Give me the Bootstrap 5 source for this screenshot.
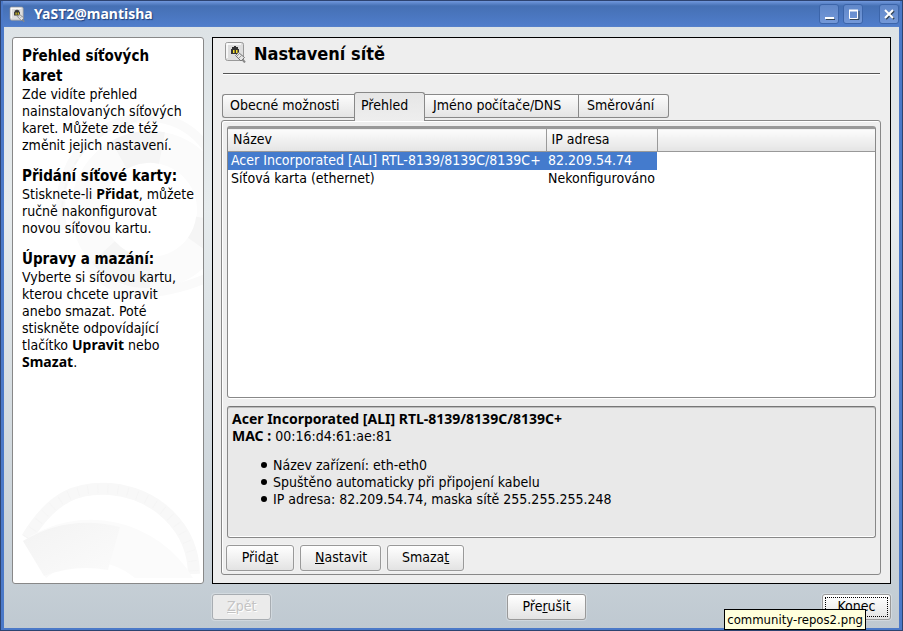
<!DOCTYPE html>
<html lang="cs">
<head>
<meta charset="utf-8">
<meta name="viewport" content="width=device-width, initial-scale=1">
<title>YaST2@mantisha</title>
<link href="https://cdn.jsdelivr.net/npm/bootstrap@5.3.0/dist/css/bootstrap.min.css" rel="stylesheet">
<style>
  body { font: 14px/17px "DejaVu Sans Condensed", "DejaVu Sans", sans-serif; color: #000; }
  b { font-family: "Noto Sans", "DejaVu Sans", sans-serif; line-height: 16px; }
  .app-window { min-height: 100vh; background: #4b79c8; border: 1px solid #2d4370; padding: 0 3px 2px; }
  .titlebar { height: 25px; background: linear-gradient(#7198dd, #4570b4 20%, #4f7dcb); color: #fff; padding: 0 1px 0 6px; margin: 0 -1px; }
  .titlebar h1 { font: bold 14px/24px "Noto Sans", "DejaVu Sans", sans-serif; text-shadow: 1px 1px 1px #1e3f7c; margin-left: 9px; }
  .win-btn { width: 20px; height: 20px; border: 1px solid #3c65aa; border-radius: 3px; background: linear-gradient(#6087c9, #7398d8); }
  .client { background: linear-gradient(#dde3e6, #e6ebed 30%, #c6cfd6 92%, #bfc9d1); padding: 10px 8px 8px; border-top: 1px solid #5580ca; }
  .help-box { flex: 0 0 192px; background: #fff; border: 1px solid #888; border-radius: 3px; overflow: hidden; }
  .help-text { padding: 8px 4px 8px 9px; }
  .help-text h2 { font: bold 15px/20px "DejaVu Sans Condensed", "DejaVu Sans", sans-serif; margin: 0; padding-right: 16px; }
  .help-text p { margin: 0 0 12px; }
  .panel { background: #eee; border: 1px solid #000; padding: 0 9px 8px 8px; }
  .panel-head { height: 36px; border-bottom: 1px solid #555; box-shadow: 0 1px #fff; margin: 0 1px 0 2px; padding: 3px 0 0 1px; }
  .panel-head h2 { font: bold 18px/26px "DejaVu Sans Condensed", "DejaVu Sans", sans-serif; margin: 0 0 0 8px; }
  .tab-strip { margin: 18px 0 0 1px; border: 0; }
  .tab-strip .nav-link { color: #000; line-height: 17px; padding: 1px 7px 2px; height: 24px; margin: 0 0 2px; border: 1px solid #888; border-left-width: 0; border-radius: 0; background: linear-gradient(#fcfcfc, #e4e4e4); }
  .tab-strip .nav-item:first-child .nav-link { width: 132px; border-left-width: 1px; border-radius: 3px 0 0 3px; border-right-width: 0; }
  .tab-strip .nav-item:nth-child(3) .nav-link { width: 154px; padding-left: 8px; }
  .tab-strip .nav-item:last-child .nav-link { width: 90px; padding-left: 8px; border-radius: 0 3px 3px 0; }
  .tab-strip .nav-link.active { width: 71px; height: 29px; padding: 0 6px 4px; margin-bottom: -1px; border: 1px solid #888; border-bottom: 0; border-radius: 3px 3px 0 0; background: linear-gradient(#e6e6e6, #eee); color: #000; position: relative; z-index: 1; }
  .pane { background: #eee; border: 1px solid #888; border-radius: 3px; box-shadow: inset 1px 1px #fff; padding: 5px 4px 3px 5px; }
  .list-frame { background: #fff; border: 1px solid #888; border-top: 2px solid #999; border-radius: 3px; box-shadow: 0 1px #fff; min-height: 272px; }
  .cards { table-layout: fixed; color: #000; --bs-table-color: #000; }
  .cards col.c-name { width: 318px; }
  .cards col.c-ip { width: 111px; }
  .cards th, .cards td { white-space: nowrap; border: 0; }
  .cards thead th { font-weight: normal; height: 23px; padding: 2px 5px 3px; background: linear-gradient(#fcfcfc, #e4e4e4); border-top: 1px solid #999; border-bottom: 1px solid #999; }
  .cards thead th:not(:last-child) { border-right: 1px solid #999; }
  .cards tbody td { height: 18px; padding: 0 0 1px 3px; line-height: 17px; }
  .cards tbody td + td { padding-left: 2px; }
  .cards tbody .picked td { background: #447bcd; color: #fff; }
  .cards tbody td:last-child { background: #fff !important; }
  .detail { background: #e9e9e9; border: 1px solid #888; border-top-color: #777; border-radius: 3px; box-shadow: inset 0 1px #bbb, inset 0 -1px #fff; margin-top: 8px; padding: 4px; }
  .detail ul { margin: 12px 0 0; padding-left: 29px; list-style: none; }
  .detail li::before { content: ""; display: inline-block; width: 6px; height: 6px; border-radius: 50%; background: #000; margin: 0 6px 2px 0; }
  .btn-kde { font-size: 14px; line-height: 17px; height: 26px; padding: 2px 14px 3px; color: #000; border: 1px solid #999; border-radius: 3px; background: linear-gradient(#fff, #e3e3e3); box-shadow: 0 0 0 1px #ffffff44; }
  .btn-kde.w-a { width: 68px; } .btn-kde.w-b { width: 81px; } .btn-kde.w-c { width: 77px; }
  .btn-kde.back { width: 59px; } .btn-kde.last { width: 69px; padding: 0; }
  .btn-kde:disabled { opacity: 1; color: #c3c3c3; border-color: #a8adb2; background: #ebebeb; text-shadow: 1px 1px #fff; }
  .btn-kde.last span { display: block; margin: 2px; height: 20px; border: 1px dotted #000; line-height: 16px; }
  .actions { gap: 6px; margin: 7px 0 0 -1px; }
  .footer-row { margin-top: 10px; padding-left: 200px; }
  .tip { position: absolute; right: 36px; bottom: 0; z-index: 5; background: #ffffdc; border: 1px solid #000; padding: 1px 2px; font-size: 13px; white-space: nowrap; }
</style>
</head>
<body>
<svg width="0" height="0" class="position-absolute" aria-hidden="true">
  <symbol id="net-icon" viewBox="0 0 22 22">
    <rect x="1.5" y="1.5" width="18" height="18" rx="2" fill="#dedede" stroke="#999"/>
    <path d="M3 17V3h14" fill="none" stroke="#fff" stroke-width="1.5"/>
    <path d="M7 13V8h1V6h2V5h2v1h2v2h1v5z" fill="#333"/>
    <path d="M9 9h1.500v3H9zM12 9h1.500v3H12z" fill="#f5dc28"/>
    <path d="M11.5 14.500l3-3 6 5-3.500 3.500z" fill="#e4e4e4" stroke="#777"/>
    <path d="M13 15l2.500-2.500M15 17l3-3" stroke="#999"/>
    <path d="M18.500 18.500l2.500 3" stroke="#888" stroke-width="2"/>
  </symbol>
</svg>
<div class="app-window d-flex flex-column position-relative">
  <header class="titlebar d-flex align-items-center">
    <svg width="16" height="16" aria-hidden="true"><use href="#net-icon"/></svg>
    <h1 class="mb-0 me-auto">YaST2@mantisha</h1>
    <div class="d-flex gap-3">
      <div class="d-flex">
        <button class="win-btn p-0 d-flex" type="button" aria-label="Minimalizovat"><svg width="18" height="18"><path d="M6 14.500h9" stroke="#345" stroke-width="1"/><path d="M5 13h9" stroke="#fff" stroke-width="2"/></svg></button>
        <button class="win-btn p-0 d-flex ms-1" type="button" aria-label="Maximalizovat"><svg width="18" height="18" fill="none"><path d="M6 14.500h9V6" stroke="#345"/><path d="M5.500 5.500h8v8h-8z" stroke="#fff"/><path d="M5 5.500h9" stroke="#fff" stroke-width="2"/></svg></button>
      </div>
      <button class="win-btn p-0 d-flex" type="button" aria-label="Zavřít"><svg width="18" height="18" fill="none"><path d="M6 6l8 8M14 6l-8 8" stroke="#345" stroke-width="2"/><path d="M5 5l8 8M13 5l-8 8" stroke="#fff" stroke-width="2"/></svg></button>
    </div>
  </header>

  <main class="client flex-grow-1 d-flex flex-column">
    <div class="flex-grow-1 d-flex gap-2">
      <aside class="help-box position-relative">
        <svg class="position-absolute top-0 start-0" width="190" height="290" fill="none" aria-hidden="true">
          <defs><linearGradient id="shade" x2="1" y2="1"><stop stop-color="#f3f3f3"/><stop offset="1" stop-color="#fbfbfb"/></linearGradient></defs>
          <circle cx="137" cy="172" r="63" stroke="#fbfbfb" stroke-width="32"/>
          <path d="M106 117a63 63 0 0 1 43-7M90 214a63 63 0 0 0 47 21M188 209a63 63 0 0 0 11-28" stroke="#f5f5f5" stroke-width="32"/>
          <path d="M50 192C36 120 90 74 145 80c22 3 38 14 50 32M72 222c22 36 64 42 122 18" stroke="#fafafa" stroke-width="9"/>
          <path d="M49 178C48 120 90 81 145 80" stroke="#f6f6f6" stroke-width="2" stroke-dasharray="6 3"/>
        </svg>
        <svg class="position-absolute bottom-0 start-0" width="190" height="103" fill="none" aria-hidden="true">
          <path d="M14 58C40 15 66 7 97 9c46 4 83 38 84 85" stroke="#f8f8f8" stroke-width="12"/>
          <path d="M14 58C40 15 66 7 97 9c46 4 83 38 84 85" stroke="#f5f5f5" stroke-width="9" stroke-dasharray="1 9"/>
          <path d="M10 61A119 119 0 0 1 180 98H122A69 69 0 0 0 33 98z" fill="#fbfbfb"/>
          <path d="M10 61Q55 34 107 47L95 90Q62 84 31 96z" fill="url(#shade)"/>
        </svg>
        <div class="help-text position-relative">
          <h2>Přehled síťových karet</h2>
          <p>Zde vidíte přehled nainstalovaných síťových karet. Můžete zde též změnit jejich nastavení.</p>
          <h2>Přidání síťové karty:</h2>
          <p>Stisknete-li <b>Přidat</b>, můžete ručně nakonfigurovat novou síťovou kartu.</p>
          <h2>Úpravy a mazání:</h2>
          <p>Vyberte si síťovou kartu, kterou chcete upravit anebo smazat. Poté stiskněte odpovídající tlačítko <b>Upravit</b> nebo <b>Smazat</b>.</p>
        </div>
      </aside>

      <section class="panel flex-grow-1 d-flex flex-column">
        <div class="panel-head d-flex align-items-start">
          <svg width="22" height="22" aria-hidden="true"><use href="#net-icon"/></svg>
          <h2>Nastavení sítě</h2>
        </div>
        <ul class="nav nav-tabs tab-strip align-items-end flex-nowrap" role="tablist">
          <li class="nav-item"><button class="nav-link text-start text-nowrap" type="button" role="tab">Obecné možnosti</button></li>
          <li class="nav-item"><button class="nav-link active text-start text-nowrap" type="button" role="tab" aria-selected="true">Přehled</button></li>
          <li class="nav-item"><button class="nav-link text-start text-nowrap" type="button" role="tab">Jméno počítače/DNS</button></li>
          <li class="nav-item"><button class="nav-link text-start text-nowrap" type="button" role="tab">Směrování</button></li>
        </ul>
        <div class="pane flex-grow-1 d-flex flex-column">
          <div class="list-frame">
            <table class="table cards mb-0">
              <colgroup><col class="c-name"><col class="c-ip"><col></colgroup>
              <thead><tr><th scope="col">Název</th><th scope="col">IP adresa</th><th></th></tr></thead>
              <tbody>
                <tr class="picked"><td>Acer Incorporated [ALI] RTL-8139/8139C/8139C+</td><td>82.209.54.74</td><td></td></tr>
                <tr><td>Síťová karta (ethernet)</td><td>Nekonfigurováno</td><td></td></tr>
              </tbody>
            </table>
          </div>
          <div class="detail flex-grow-1">
            <div><b>Acer Incorporated [ALI] RTL-8139/8139C/8139C+</b></div>
            <div><b>MAC :</b> 00:16:d4:61:ae:81</div>
            <ul>
              <li>Název zařízení: eth-eth0</li>
              <li>Spuštěno automaticky při připojení kabelu</li>
              <li>IP adresa: 82.209.54.74, maska sítě 255.255.255.248</li>
            </ul>
          </div>
          <div class="actions d-flex">
            <button class="btn btn-kde w-a" type="button">Přid<u>a</u>t</button>
            <button class="btn btn-kde w-b" type="button"><u>N</u>astavit</button>
            <button class="btn btn-kde w-c" type="button">Smaza<u>t</u></button>
          </div>
        </div>
      </section>
    </div>
    <div class="footer-row d-flex justify-content-between">
      <button class="btn btn-kde back" type="button" disabled><u>Z</u>pět</button>
      <button class="btn btn-kde" type="button">Pře<u>r</u>ušit</button>
      <button class="btn btn-kde last" type="button"><span><u>K</u>onec</span></button>
    </div>
  </main>
  <div class="tip" role="tooltip">community-repos2.png</div>
</div>
<script src="https://cdn.jsdelivr.net/npm/bootstrap@5.3.0/dist/js/bootstrap.bundle.min.js"></script>
</body>
</html>
